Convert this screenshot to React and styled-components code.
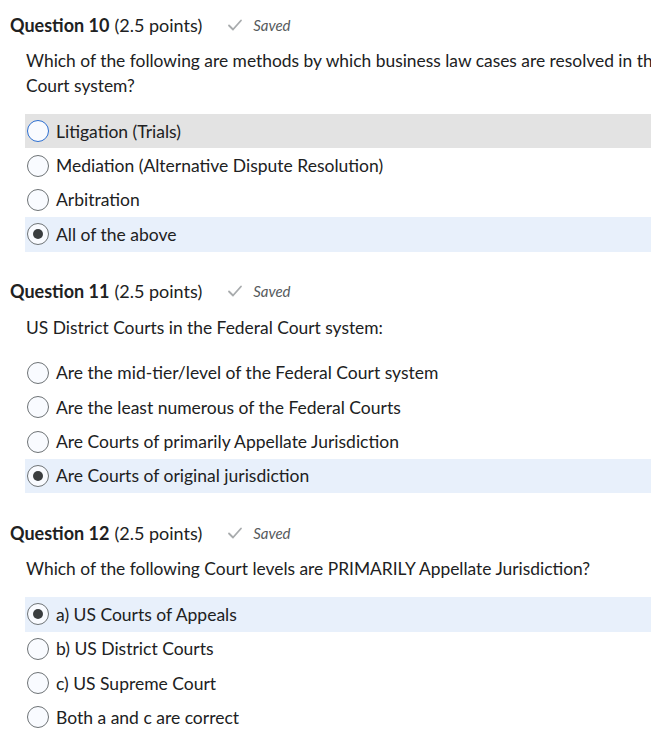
import React from "react";
import styled, { createGlobalStyle } from "styled-components";

const GlobalStyle = createGlobalStyle`
  html, body {
    margin: 0;
    padding: 0;
    background: #ffffff;
    overflow: hidden;
  }
  body {
    font-family: Lato, "Open Sans", "Liberation Sans", sans-serif;
    color: #202122;
  }
`;

const Page = styled.div`
  width: 750px;
  padding: 12px 0 0 10px;
`;

const Question = styled.section`
  margin-bottom: 27px;
`;

const Header = styled.div`
  display: flex;
  align-items: center;
  height: 25px;
  font-size: 18px;
  margin-bottom: 11px;
`;

const Title = styled.span`
  font-weight: 700;
`;

const Points = styled.span`
  margin-left: 5px;
`;

const Status = styled.span`
  display: inline-flex;
  align-items: center;
  margin-left: 25px;
  font-size: 15px;
  font-style: italic;
  color: #565a5c;
  gap: 10px;
`;

const Prompt = styled.p`
  margin: 0 0 16px 16px;
  font-size: 17.4px;
  line-height: 25px;
`;

const Options = styled.div`
  margin-left: 15px;
`;

const Row = styled.label`
  display: flex;
  align-items: center;
  height: 34.4px;
  padding-left: 2px;
  font-size: 17.5px;
  background: ${(p) =>
    p.$hover ? "#e3e3e3" : p.$checked ? "#e8f0fb" : "transparent"};
`;

const Radio = styled.span`
  box-sizing: border-box;
  width: 22px;
  height: 22px;
  border-radius: 50%;
  border: ${(p) => (p.$hover ? "1.5px solid #2d6fd1" : "1px solid #6e7376")};
  background: #f9fbff;
  display: flex;
  align-items: center;
  justify-content: center;
  margin-right: 7px;
  flex-shrink: 0;

  &::after {
    content: "";
    display: ${(p) => (p.$checked ? "block" : "none")};
    width: 10px;
    height: 10px;
    border-radius: 50%;
    background: #3a3d3f;
  }
`;

const Check = () => (
  <svg width="16" height="14" viewBox="0 0 16 14" fill="none">
    <path
      d="M2 7.5 L6 11.5 L14 2.5"
      stroke="#a8abad"
      strokeWidth="1.8"
      strokeLinecap="round"
      strokeLinejoin="round"
    />
  </svg>
);

const questions = [
  {
    num: 10,
    prompt:
      "Which of the following are methods by which business law cases are resolved in the Federal Court system?",
    options: [
      "Litigation (Trials)",
      "Mediation (Alternative Dispute Resolution)",
      "Arbitration",
      "All of the above",
    ],
    checked: 3,
    hover: 0,
  },
  {
    num: 11,
    prompt: "US District Courts in the Federal Court system:",
    options: [
      "Are the mid-tier/level of the Federal Court system",
      "Are the least numerous of the Federal Courts",
      "Are Courts of primarily Appellate Jurisdiction",
      "Are Courts of original jurisdiction",
    ],
    checked: 3,
  },
  {
    num: 12,
    prompt:
      "Which of the following Court levels are PRIMARILY Appellate Jurisdiction?",
    options: [
      "a) US Courts of Appeals",
      "b) US District Courts",
      "c) US Supreme Court",
      "Both a and c are correct",
    ],
    checked: 0,
  },
];

function App() {
  return (
    <Page>
      <GlobalStyle />
      {questions.map((q) => (
        <Question key={q.num}>
          <Header>
            <Title>Question {q.num}</Title>
            <Points>(2.5 points)</Points>
            <Status>
              <Check />
              Saved
            </Status>
          </Header>
          <Prompt>{q.prompt}</Prompt>
          <Options>
            {q.options.map((text, i) => (
              <Row
                key={text}
                $checked={q.checked === i}
                $hover={q.hover === i}
              >
                <Radio $checked={q.checked === i} $hover={q.hover === i} />
                {text}
              </Row>
            ))}
          </Options>
        </Question>
      ))}
    </Page>
  );
}

export default App;
